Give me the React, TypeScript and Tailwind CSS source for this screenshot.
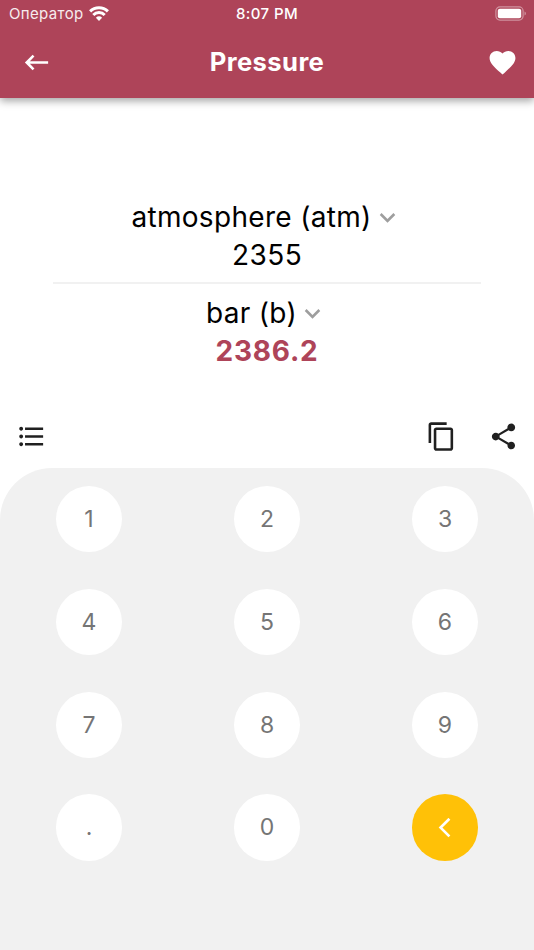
import {
  MdContentCopy,
  MdFavorite,
  MdFormatListBulleted,
  MdKeyboardArrowDown,
  MdKeyboardBackspace,
  MdShare,
} from "react-icons/md"

const keys = ["1", "2", "3", "4", "5", "6", "7", "8", "9", ".", "0"]

function StatusBar() {
  return (
    <div className="grid h-[27px] grid-cols-3 items-center text-[15px] leading-none">
      <div className="flex items-center gap-[5px] pl-[9px]">
        <span className="tracking-[0.35px] opacity-90">Оператор</span>
        <svg width="20" height="15" viewBox="0 0 20 15" fill="none" stroke="currentColor" strokeWidth="3">
          <path d="M1.1 5.4a12.6 12.6 0 0 1 17.8 0" />
          <path d="M4.3 9a8 8 0 0 1 11.4 0" />
          <path d="M10 15 6.9 11.8a4.5 4.5 0 0 1 6.2 0Z" fill="currentColor" stroke="none" />
        </svg>
      </div>
      <span className="text-center font-medium tracking-[0.4px]">8:07 PM</span>
      <div className="flex justify-end pr-[7px]">
        <svg width="32" height="15" viewBox="0 0 32 15" fill="none">
          <rect x="0.9" y="0.9" width="27.2" height="13.2" rx="4" stroke="white" strokeOpacity="0.42" strokeWidth="1.2" />
          <rect x="2.8" y="2.8" width="23.4" height="9.4" rx="2" fill="white" />
          <path d="M29.6 5.4v4.2c1.6-.7 1.6-3.5 0-4.2Z" fill="white" fillOpacity="0.5" />
        </svg>
      </div>
    </div>
  )
}

function Header() {
  return (
    <header className="h-[98px] bg-[#ae4459] text-white shadow-[0_3px_8px_rgba(0,0,0,0.36)]">
      <StatusBar />
      <div className="grid h-[71px] grid-cols-[1fr_auto_1fr] items-center px-[16px]">
        <button className="ml-[5px] w-fit">
          <MdKeyboardBackspace size={31} />
        </button>
        <h1 className="pb-px text-[25.6px] leading-none font-bold tracking-[0.4px]">Pressure</h1>
        <button className="w-fit justify-self-end">
          <MdFavorite size={31} />
        </button>
      </div>
    </header>
  )
}

function UnitPicker({ label }: { label: string }) {
  return (
    <button className="flex h-[38px] items-center justify-center text-[28px] tracking-[0.32px]">
      {label}
      <MdKeyboardArrowDown size={31} className="text-[#9e9e9e]" />
    </button>
  )
}

function Converter() {
  return (
    <section className="mx-[53px] mt-[100px] flex flex-col items-center leading-[38px]">
      <UnitPicker label="atmosphere (atm)" />
      <div className="h-[38px] text-[28px] tracking-[0.45px]">2355</div>
      <div className="mt-[8px] mb-[10px] h-[2px] w-full bg-[#f1f1f1]" />
      <UnitPicker label="bar (b)" />
      <div className="h-[38px] text-[28px] font-bold tracking-[0.75px] text-[#ae4459]">2386.2</div>
    </section>
  )
}

function Toolbar() {
  return (
    <div className="mt-[36px] flex h-[62px] items-center justify-between pr-[15.4px] pb-px pl-[15.5px] text-[#202020]">
      <MdFormatListBulleted size={31} />
      <div className="flex gap-[31px]">
        <MdContentCopy size={31} />
        <MdShare size={31} />
      </div>
    </div>
  )
}

function Keypad() {
  return (
    <section className="grid flex-1 auto-rows-min grid-cols-3 justify-items-center gap-y-[36.4px] rounded-t-[52px] bg-[#f1f1f1] pt-[18px]">
      {keys.map((key) => (
        <button key={key} className="flex size-[66.4px] items-center justify-center rounded-full bg-white text-[23px] text-[#757575]">
          {key}
        </button>
      ))}
      <button className="flex size-[66.4px] items-center justify-center rounded-full bg-[#ffc107] text-white">
        <svg width="14" height="20" viewBox="0 0 14 20" fill="none" stroke="currentColor" strokeWidth="2.7">
          <path d="M11.4 .8 2.6 9.6l8.8 8.8" />
        </svg>
      </button>
    </section>
  )
}

export default function App() {
  return (
    <main className="flex h-[950px] w-[534px] flex-col overflow-hidden bg-white font-['Inter',sans-serif] text-black">
      <Header />
      <Converter />
      <Toolbar />
      <Keypad />
    </main>
  )
}
